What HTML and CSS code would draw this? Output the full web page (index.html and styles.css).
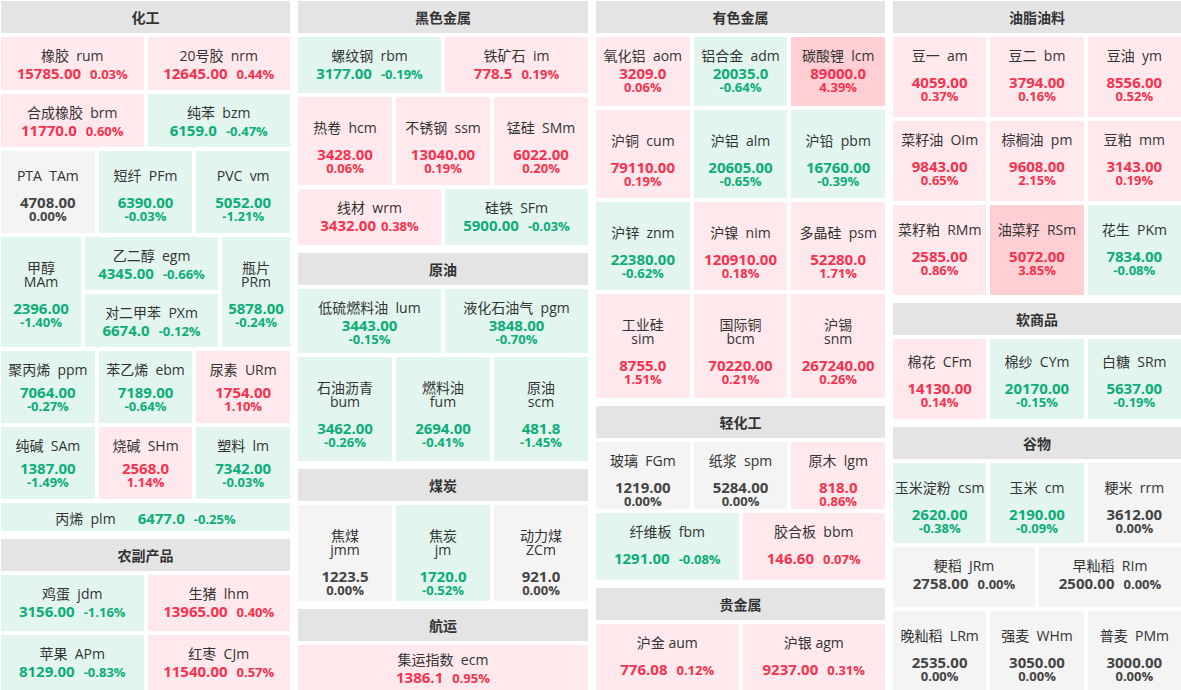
FILE: index.html
```html
<!DOCTYPE html>
<html lang="zh-CN">
<head>
<meta charset="utf-8">
<title>期货板块行情</title>
<link rel="stylesheet" href="styles.css">
</head>
<body>
<div class="board">

  <!-- Column 1 -->
  <div class="col cw1">
    <div class="grp">
      <div class="hd">化工</div>
      <div class="row h53">
        <div class="t up pt12 sp-t"><div class="nm">橡胶&nbsp;&nbsp;rum</div><div class="v inl"><span class="px">15785.00</span><span class="pc">0.03%</span></div></div>
        <div class="t up pt12 sp-t"><div class="nm">20号胶&nbsp;&nbsp;nrm</div><div class="v inl"><span class="px">12645.00</span><span class="pc">0.44%</span></div></div>
      </div>
      <div class="row h53">
        <div class="t up pt12 sp-t"><div class="nm">合成橡胶&nbsp;&nbsp;brm</div><div class="v inl"><span class="px">11770.0</span><span class="pc">0.60%</span></div></div>
        <div class="t dn pt12 sp-t"><div class="nm">纯苯&nbsp;&nbsp;bzm</div><div class="v inl"><span class="px">6159.0</span><span class="pc">-0.47%</span></div></div>
      </div>
      <div class="row h82">
        <div class="t fl pt18 sp-w"><div class="nm">PTA&nbsp;&nbsp;TAm</div><div class="v"><div class="px">4708.00</div><div class="pc">0.00%</div></div></div>
        <div class="t dn pt18 sp-w"><div class="nm">短纤&nbsp;&nbsp;PFm</div><div class="v"><div class="px">6390.00</div><div class="pc">-0.03%</div></div></div>
        <div class="t dn pt18 sp-w"><div class="nm">PVC&nbsp;&nbsp;vm</div><div class="v"><div class="px">5052.00</div><div class="pc">-1.21%</div></div></div>
      </div>
      <div class="row h110">
        <div class="t dn pt24 sp-w w80"><div class="nm">甲醇<br>MAm</div><div class="v"><div class="px">2396.00</div><div class="pc">-1.40%</div></div></div>
        <div class="sub w133">
          <div class="t dn pt12 sp-t"><div class="nm">乙二醇&nbsp;&nbsp;egm</div><div class="v inl"><span class="px">4345.00</span><span class="pc">-0.66%</span></div></div>
          <div class="t dn pt12 sp-t"><div class="nm">对二甲苯&nbsp;&nbsp;PXm</div><div class="v inl"><span class="px">6674.0</span><span class="pc">-0.12%</span></div></div>
        </div>
        <div class="t dn pt24 sp-w w68"><div class="nm">瓶片<br>PRm</div><div class="v"><div class="px">5878.00</div><div class="pc">-0.24%</div></div></div>
      </div>
      <div class="row h72">
        <div class="t dn pt12 sp-m"><div class="nm">聚丙烯&nbsp;&nbsp;ppm</div><div class="v"><div class="px">7064.00</div><div class="pc">-0.27%</div></div></div>
        <div class="t dn pt12 sp-m"><div class="nm">苯乙烯&nbsp;&nbsp;ebm</div><div class="v"><div class="px">7189.00</div><div class="pc">-0.64%</div></div></div>
        <div class="t up pt12 sp-m"><div class="nm">尿素&nbsp;&nbsp;URm</div><div class="v"><div class="px">1754.00</div><div class="pc">1.10%</div></div></div>
      </div>
      <div class="row h72">
        <div class="t dn pt12 sp-m"><div class="nm">纯碱&nbsp;&nbsp;SAm</div><div class="v"><div class="px">1387.00</div><div class="pc">-1.49%</div></div></div>
        <div class="t up pt12 sp-m"><div class="nm">烧碱&nbsp;&nbsp;SHm</div><div class="v"><div class="px">2568.0</div><div class="pc">1.14%</div></div></div>
        <div class="t dn pt12 sp-m"><div class="nm">塑料&nbsp;&nbsp;lm</div><div class="v"><div class="px">7342.00</div><div class="pc">-0.03%</div></div></div>
      </div>
      <div class="row h28">
        <div class="t dn one"><span class="nm">丙烯&nbsp;&nbsp;plm</span><span class="px">6477.0</span><span class="pc">-0.25%</span></div>
      </div>
    </div>
    <div class="grp">
      <div class="hd">农副产品</div>
      <div class="row h56">
        <div class="t dn pt12 sp-t"><div class="nm">鸡蛋&nbsp;&nbsp;jdm</div><div class="v inl"><span class="px">3156.00</span><span class="pc">-1.16%</span></div></div>
        <div class="t up pt12 sp-t"><div class="nm">生猪&nbsp;&nbsp;lhm</div><div class="v inl"><span class="px">13965.00</span><span class="pc">0.40%</span></div></div>
      </div>
      <div class="row h56">
        <div class="t dn pt12 sp-t"><div class="nm">苹果&nbsp;&nbsp;APm</div><div class="v inl"><span class="px">8129.00</span><span class="pc">-0.83%</span></div></div>
        <div class="t up pt12 sp-t"><div class="nm">红枣&nbsp;&nbsp;CJm</div><div class="v inl"><span class="px">11540.00</span><span class="pc">0.57%</span></div></div>
      </div>
    </div>
  </div>

  <!-- Column 2 -->
  <div class="col cw2">
    <div class="grp">
      <div class="hd">黑色金属</div>
      <div class="row h56">
        <div class="t dn pt12 sp-t"><div class="nm">螺纹钢&nbsp;&nbsp;rbm</div><div class="v inl"><span class="px">3177.00</span><span class="pc">-0.19%</span></div></div>
        <div class="t up pt12 sp-t"><div class="nm">铁矿石&nbsp;&nbsp;im</div><div class="v inl"><span class="px">778.5</span><span class="pc">0.19%</span></div></div>
      </div>
      <div class="row h88">
        <div class="t up pt24 sp-w"><div class="nm">热卷&nbsp;&nbsp;hcm</div><div class="v"><div class="px">3428.00</div><div class="pc">0.06%</div></div></div>
        <div class="t up pt24 sp-w"><div class="nm">不锈钢&nbsp;&nbsp;ssm</div><div class="v"><div class="px">13040.00</div><div class="pc">0.19%</div></div></div>
        <div class="t up pt24 sp-w"><div class="nm">锰硅&nbsp;&nbsp;SMm</div><div class="v"><div class="px">6022.00</div><div class="pc">0.20%</div></div></div>
      </div>
      <div class="row h56">
        <div class="t up pt12 sp-t"><div class="nm">线材&nbsp;&nbsp;wrm</div><div class="v inl near"><span class="px">3432.00</span><span class="pc">0.38%</span></div></div>
        <div class="t dn pt12 sp-t"><div class="nm">硅铁&nbsp;&nbsp;SFm</div><div class="v inl"><span class="px">5900.00</span><span class="pc">-0.03%</span></div></div>
      </div>
    </div>
    <div class="grp">
      <div class="hd">原油</div>
      <div class="row h64">
        <div class="t dn pt12 sp-t"><div class="nm">低硫燃料油&nbsp;&nbsp;lum</div><div class="v"><div class="px">3443.00</div><div class="pc">-0.15%</div></div></div>
        <div class="t dn pt12 sp-t"><div class="nm">液化石油气&nbsp;&nbsp;pgm</div><div class="v"><div class="px">3848.00</div><div class="pc">-0.70%</div></div></div>
      </div>
      <div class="row h104">
        <div class="t dn pt24 sp-w"><div class="nm">石油沥青<br>bum</div><div class="v"><div class="px">3462.00</div><div class="pc">-0.26%</div></div></div>
        <div class="t dn pt24 sp-w"><div class="nm">燃料油<br>fum</div><div class="v"><div class="px">2694.00</div><div class="pc">-0.41%</div></div></div>
        <div class="t dn pt24 sp-w"><div class="nm">原油<br>scm</div><div class="v"><div class="px">481.8</div><div class="pc">-1.45%</div></div></div>
      </div>
    </div>
    <div class="grp">
      <div class="hd">煤炭</div>
      <div class="row h96">
        <div class="t fl pt24 sp-w"><div class="nm">焦煤<br>jmm</div><div class="v"><div class="px">1223.5</div><div class="pc">0.00%</div></div></div>
        <div class="t dn pt24 sp-w"><div class="nm">焦炭<br>jm</div><div class="v"><div class="px">1720.0</div><div class="pc">-0.52%</div></div></div>
        <div class="t fl pt24 sp-w"><div class="nm">动力煤<br>ZCm</div><div class="v"><div class="px">921.0</div><div class="pc">0.00%</div></div></div>
      </div>
    </div>
    <div class="grp">
      <div class="hd">航运</div>
      <div class="row h56">
        <div class="t up pt8 sp-t"><div class="nm">集运指数&nbsp;&nbsp;ecm</div><div class="v inl"><span class="px">1386.1</span><span class="pc">0.95%</span></div></div>
      </div>
    </div>
  </div>

  <!-- Column 3 -->
  <div class="col cw3">
    <div class="grp">
      <div class="hd">有色金属</div>
      <div class="row h69">
        <div class="t up pt12 sp-t"><div class="nm">氧化铝&nbsp;&nbsp;aom</div><div class="v"><div class="px">3209.0</div><div class="pc">0.06%</div></div></div>
        <div class="t dn pt12 sp-t"><div class="nm">铝合金&nbsp;&nbsp;adm</div><div class="v"><div class="px">20035.0</div><div class="pc">-0.64%</div></div></div>
        <div class="t up2 pt12 sp-t"><div class="nm">碳酸锂&nbsp;&nbsp;lcm</div><div class="v"><div class="px">89000.0</div><div class="pc">4.39%</div></div></div>
      </div>
      <div class="row h88">
        <div class="t up pt24 sp-w"><div class="nm">沪铜&nbsp;&nbsp;cum</div><div class="v"><div class="px">79110.00</div><div class="pc">0.19%</div></div></div>
        <div class="t dn pt24 sp-w"><div class="nm">沪铝&nbsp;&nbsp;alm</div><div class="v"><div class="px">20605.00</div><div class="pc">-0.65%</div></div></div>
        <div class="t dn pt24 sp-w"><div class="nm">沪铅&nbsp;&nbsp;pbm</div><div class="v"><div class="px">16760.00</div><div class="pc">-0.39%</div></div></div>
      </div>
      <div class="row h88">
        <div class="t dn pt24 sp-w"><div class="nm">沪锌&nbsp;&nbsp;znm</div><div class="v"><div class="px">22380.00</div><div class="pc">-0.62%</div></div></div>
        <div class="t up pt24 sp-w"><div class="nm">沪镍&nbsp;&nbsp;nim</div><div class="v"><div class="px">120910.00</div><div class="pc">0.18%</div></div></div>
        <div class="t up pt24 sp-w"><div class="nm">多晶硅&nbsp;&nbsp;psm</div><div class="v"><div class="px">52280.0</div><div class="pc">1.71%</div></div></div>
      </div>
      <div class="row h104">
        <div class="t up pt24 sp-w"><div class="nm">工业硅<br>sim</div><div class="v"><div class="px">8755.0</div><div class="pc">1.51%</div></div></div>
        <div class="t up pt24 sp-w"><div class="nm">国际铜<br>bcm</div><div class="v"><div class="px">70220.00</div><div class="pc">0.21%</div></div></div>
        <div class="t up pt24 sp-w"><div class="nm">沪锡<br>snm</div><div class="v"><div class="px">267240.00</div><div class="pc">0.26%</div></div></div>
      </div>
    </div>
    <div class="grp">
      <div class="hd">轻化工</div>
      <div class="row h67">
        <div class="t fl pt12 sp-w"><div class="nm">玻璃&nbsp;&nbsp;FGm</div><div class="v"><div class="px">1219.00</div><div class="pc">0.00%</div></div></div>
        <div class="t fl pt12 sp-w"><div class="nm">纸浆&nbsp;&nbsp;spm</div><div class="v"><div class="px">5284.00</div><div class="pc">0.00%</div></div></div>
        <div class="t up pt12 sp-w"><div class="nm">原木&nbsp;&nbsp;lgm</div><div class="v"><div class="px">818.0</div><div class="pc">0.86%</div></div></div>
      </div>
      <div class="row h67">
        <div class="t dn pt12 sp-w"><div class="nm">纤维板&nbsp;&nbsp;fbm</div><div class="v inl"><span class="px">1291.00</span><span class="pc">-0.08%</span></div></div>
        <div class="t up pt12 sp-w"><div class="nm">胶合板&nbsp;&nbsp;bbm</div><div class="v inl"><span class="px">146.60</span><span class="pc">0.07%</span></div></div>
      </div>
    </div>
    <div class="grp">
      <div class="hd">贵金属</div>
      <div class="row h67">
        <div class="t up pt12 sp-w"><div class="nm">沪金 aum</div><div class="v inl"><span class="px">776.08</span><span class="pc">0.12%</span></div></div>
        <div class="t up pt12 sp-w"><div class="nm">沪银 agm</div><div class="v inl"><span class="px">9237.00</span><span class="pc">0.31%</span></div></div>
      </div>
    </div>
  </div>

  <!-- Column 4 -->
  <div class="col cw4">
    <div class="grp">
      <div class="hd">油脂油料</div>
      <div class="row h80">
        <div class="t up pt12 sp-w"><div class="nm">豆一&nbsp;&nbsp;am</div><div class="v"><div class="px">4059.00</div><div class="pc">0.37%</div></div></div>
        <div class="t up pt12 sp-w"><div class="nm">豆二&nbsp;&nbsp;bm</div><div class="v"><div class="px">3794.00</div><div class="pc">0.16%</div></div></div>
        <div class="t up pt12 sp-w"><div class="nm">豆油&nbsp;&nbsp;ym</div><div class="v"><div class="px">8556.00</div><div class="pc">0.52%</div></div></div>
      </div>
      <div class="row h80">
        <div class="t up pt12 sp-w"><div class="nm">菜籽油&nbsp;&nbsp;OIm</div><div class="v"><div class="px">9843.00</div><div class="pc">0.65%</div></div></div>
        <div class="t up pt12 sp-w"><div class="nm">棕榈油&nbsp;&nbsp;pm</div><div class="v"><div class="px">9608.00</div><div class="pc">2.15%</div></div></div>
        <div class="t up pt12 sp-w"><div class="nm">豆粕&nbsp;&nbsp;mm</div><div class="v"><div class="px">3143.00</div><div class="pc">0.19%</div></div></div>
      </div>
      <div class="row h90">
        <div class="t up pt18 sp-w"><div class="nm">菜籽粕&nbsp;&nbsp;RMm</div><div class="v"><div class="px">2585.00</div><div class="pc">0.86%</div></div></div>
        <div class="t up2 pt18 sp-w"><div class="nm">油菜籽&nbsp;&nbsp;RSm</div><div class="v"><div class="px">5072.00</div><div class="pc">3.85%</div></div></div>
        <div class="t dn pt18 sp-w"><div class="nm">花生&nbsp;&nbsp;PKm</div><div class="v"><div class="px">7834.00</div><div class="pc">-0.08%</div></div></div>
      </div>
    </div>
    <div class="grp">
      <div class="hd">软商品</div>
      <div class="row h80">
        <div class="t up pt16 sp-w"><div class="nm">棉花&nbsp;&nbsp;CFm</div><div class="v"><div class="px">14130.00</div><div class="pc">0.14%</div></div></div>
        <div class="t dn pt16 sp-w"><div class="nm">棉纱&nbsp;&nbsp;CYm</div><div class="v"><div class="px">20170.00</div><div class="pc">-0.15%</div></div></div>
        <div class="t dn pt16 sp-w"><div class="nm">白糖&nbsp;&nbsp;SRm</div><div class="v"><div class="px">5637.00</div><div class="pc">-0.19%</div></div></div>
      </div>
    </div>
    <div class="grp">
      <div class="hd">谷物</div>
      <div class="row h80">
        <div class="t dn pt18 sp-w"><div class="nm">玉米淀粉&nbsp;&nbsp;csm</div><div class="v"><div class="px">2620.00</div><div class="pc">-0.38%</div></div></div>
        <div class="t dn pt18 sp-w"><div class="nm">玉米&nbsp;&nbsp;cm</div><div class="v"><div class="px">2190.00</div><div class="pc">-0.09%</div></div></div>
        <div class="t fl pt18 sp-w"><div class="nm">粳米&nbsp;&nbsp;rrm</div><div class="v"><div class="px">3612.00</div><div class="pc">0.00%</div></div></div>
      </div>
      <div class="row h60">
        <div class="t fl pt12 sp-t"><div class="nm">粳稻&nbsp;&nbsp;JRm</div><div class="v inl"><span class="px">2758.00</span><span class="pc">0.00%</span></div></div>
        <div class="t fl pt12 sp-t"><div class="nm">早籼稻&nbsp;&nbsp;RIm</div><div class="v inl"><span class="px">2500.00</span><span class="pc">0.00%</span></div></div>
      </div>
      <div class="row h80">
        <div class="t fl pt18 sp-w"><div class="nm">晚籼稻&nbsp;&nbsp;LRm</div><div class="v"><div class="px">2535.00</div><div class="pc">0.00%</div></div></div>
        <div class="t fl pt18 sp-w"><div class="nm">强麦&nbsp;&nbsp;WHm</div><div class="v"><div class="px">3050.00</div><div class="pc">0.00%</div></div></div>
        <div class="t fl pt18 sp-w"><div class="nm">普麦&nbsp;&nbsp;PMm</div><div class="v"><div class="px">3000.00</div><div class="pc">0.00%</div></div></div>
      </div>
    </div>
  </div>

</div>
</body>
</html>
```
FILE: styles.css
```css
html, body {
  margin: 0;
  padding: 0;
  background: #ffffff;
}
body {
  font-family: "Open Sans", "Noto Sans CJK SC", sans-serif;
  color: #333333;
  height: 690px;
  overflow: hidden;
}
.board {
  display: flex;
  align-items: flex-start;
  gap: 8px;
  padding: 1px 0 0 1px;
}
.col {
  display: flex;
  flex-direction: column;
  gap: 8px;
  flex: none;
}
.cw1 { width: 289px; }
.cw2 { width: 290px; }
.cw3 { width: 289px; }
.cw4 { width: 288px; }

.grp {
  display: flex;
  flex-direction: column;
  gap: 4px;
}
.hd {
  height: 32px;
  background: #e4e4e4;
  display: flex;
  align-items: center;
  justify-content: center;
  font-size: 14px;
  font-weight: 700;
  color: #333333;
}
.row {
  display: flex;
  gap: 4px;
}
.row > .t { flex: 1 1 0; }
.row > .w80 { flex: none; width: 80px; }
.row > .w68 { flex: none; width: 68px; }
.sub {
  display: flex;
  flex-direction: column;
  gap: 4px;
  flex: none;
}
.sub > .t { flex: 1 1 0; }
.w133 { width: 133px; }

.h28 { height: 28px; }
.h53 { height: 53px; }
.h56 { height: 56px; }
.h60 { height: 60px; }
.h64 { height: 64px; }
.h67 { height: 67px; }
.h69 { height: 69px; }
.h72 { height: 72px; }
.h80 { height: 80px; }
.h82 { height: 82px; }
.h88 { height: 88px; }
.h90 { height: 90px; }
.h96 { height: 96px; }
.h104 { height: 104px; }
.h110 { height: 110px; }

.t {
  display: flex;
  flex-direction: column;
  align-items: center;
  text-align: center;
  box-sizing: border-box;
  min-width: 0;
  overflow: hidden;
  white-space: nowrap;
}
.pt8 { padding-top: 8px; }
.pt12 { padding-top: 12px; }
.pt16 { padding-top: 16px; }
.pt18 { padding-top: 18px; }
.pt24 { padding-top: 24px; }

.nm {
  font-size: 14px;
  line-height: 14px;
  color: #333333;
}
.sp-t .nm { margin-bottom: 2px; }
.sp-m .nm { margin-bottom: 7px; }
.sp-w .nm { margin-bottom: 11px; }

.px {
  font-size: 15px;
  line-height: 16px;
  font-weight: 700;
}
.pc {
  font-size: 13px;
  line-height: 12px;
  font-weight: 700;
}
.sp-t .v .pc { line-height: 13px; }
.v.inl {
  line-height: 16px;
}
.v.inl .px, .v.inl .pc { line-height: 16px; }
.v.inl .pc { margin-left: 9px; }
.v.inl.near .pc { margin-left: 5px; }

.t.one {
  flex-direction: row;
  justify-content: center;
  align-items: baseline;
  padding-top: 7px;
}
.t.one .nm { line-height: 16px; margin-right: 22px; }
.t.one .px { line-height: 16px; }
.t.one .pc { line-height: 16px; margin-left: 9px; }

.up { background: #ffe9ec; color: #f5334f; }
.up2 { background: #ffcfd3; color: #f5334f; }
.dn { background: #e2f6ef; color: #0dad77; }
.fl { background: #f4f4f4; color: #444444; }
```
